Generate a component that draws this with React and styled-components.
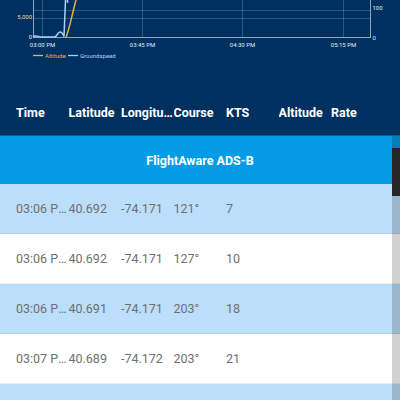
import styled, { createGlobalStyle } from 'styled-components';

const NAVY = '#00305f';

const rows = [
  { time: '03:06 PM', lat: '40.692', lon: '-74.171', course: '121°', kts: '7' },
  { time: '03:06 PM', lat: '40.692', lon: '-74.171', course: '127°', kts: '10' },
  { time: '03:06 PM', lat: '40.691', lon: '-74.171', course: '203°', kts: '18' },
  { time: '03:07 PM', lat: '40.689', lon: '-74.172', course: '203°', kts: '21' },
  { time: '03:07 PM', lat: '40.687', lon: '-74.173', course: '203°', kts: '24' },
];

const columns = ['Time', 'Latitude', 'Longitude', 'Course', 'KTS', 'Altitude', 'Rate'];

const GlobalStyle = createGlobalStyle`
  html, body {
    margin: 0;
    padding: 0;
    background: ${NAVY};
    overflow: hidden;
  }
  * {
    box-sizing: border-box;
  }
`;

const Chart = () => (
  <svg width="400" height="90" viewBox="0 0 400 90">
    <g stroke="rgba(255,255,255,0.18)" strokeWidth="1">
      <line x1="33" y1="10.5" x2="371" y2="10.5" />
      <line x1="33" y1="18.5" x2="371" y2="18.5" />
      <line x1="42.5" y1="0" x2="42.5" y2="37" />
      <line x1="142.5" y1="0" x2="142.5" y2="37" />
      <line x1="242.5" y1="0" x2="242.5" y2="37" />
      <line x1="343.5" y1="0" x2="343.5" y2="37" />
    </g>
    <g stroke="rgba(200,215,235,0.7)" strokeWidth="1" fill="none">
      <line x1="33.5" y1="0" x2="33.5" y2="37.5" />
      <line x1="33" y1="37.5" x2="371" y2="37.5" />
      <line x1="370.5" y1="0" x2="370.5" y2="37.5" />
    </g>
    <path
      d="M33,36.5 C36,35 38,37 42,37 L55,37 C57,36 58,32 60,32 C62,32 63,34 64,36.5 L65.5,0 M67.5,0 L67.5,3"
      stroke="#a9d0ff"
      strokeWidth="1.5"
      fill="none"
    />
    <path d="M66,37.5 C69,30 72,15 76,0" stroke="#e9b23c" strokeWidth="1.5" fill="none" />
    <g fontFamily="Roboto, sans-serif" fontSize="6" fill="#e6ecf5">
      <text x="32" y="18.5" textAnchor="end" fill="#efd59a">5,000</text>
      <text x="32" y="38.5" textAnchor="end">0</text>
      <text x="372.5" y="9.5">100</text>
      <text x="372.5" y="39.5">0</text>
      <text x="42.5" y="46.5" textAnchor="middle">03:00 PM</text>
      <text x="142.5" y="46.5" textAnchor="middle">03:45 PM</text>
      <text x="242.5" y="46.5" textAnchor="middle">04:30 PM</text>
      <text x="343.5" y="46.5" textAnchor="middle">05:15 PM</text>
    </g>
    <line x1="33" y1="55.5" x2="43" y2="55.5" stroke="#e9b23c" strokeWidth="1.3" />
    <text x="45" y="57.5" fontFamily="Roboto, sans-serif" fontSize="6" fill="#e9b23c">Altitude</text>
    <line x1="68" y1="55.5" x2="78" y2="55.5" stroke="#a9d0ff" strokeWidth="1.3" />
    <text x="80" y="57.5" fontFamily="Roboto, sans-serif" fontSize="6" fill="#a9d0ff">Groundspeed</text>
  </svg>
);

const App = () => (
  <Page>
    <GlobalStyle />
    <ChartBox>
      <Chart />
    </ChartBox>
    <HeaderRow>
      {columns.map((c) => (
        <HeadCell key={c}>{c}</HeadCell>
      ))}
    </HeaderRow>
    <Body>
      <SectionRow>FlightAware ADS-B</SectionRow>
      {rows.map((r, i) => (
        <DataRow key={i} $shaded={i % 2 === 0}>
          <Cell>{r.time}</Cell>
          <Cell>{r.lat}</Cell>
          <Cell>{r.lon}</Cell>
          <Cell>{r.course}</Cell>
          <Cell>{r.kts}</Cell>
          <Cell />
          <Cell />
        </DataRow>
      ))}
      <ScrollTrack>
        <ScrollThumb />
      </ScrollTrack>
    </Body>
  </Page>
);

export default App;

const Page = styled.div`
  width: 400px;
  height: 400px;
  overflow: hidden;
  background: ${NAVY};
  font-family: Roboto, 'Noto Sans', sans-serif;
`;

const ChartBox = styled.div`
  height: 90px;
  display: flex;
`;

const HeaderRow = styled.div`
  display: flex;
  height: 45px;
  align-items: center;
  padding-left: 16px;
`;

const HeadCell = styled.div`
  width: 52.5px;
  color: #ffffff;
  font-size: 12.5px;
  font-weight: 700;
  white-space: nowrap;
  overflow: hidden;
  text-overflow: ellipsis;
`;

const Body = styled.div`
  position: relative;
  border-top: 1px solid #0d5d96;
`;

const SectionRow = styled.div`
  height: 48px;
  display: flex;
  align-items: center;
  justify-content: center;
  background: #039be5;
  color: #ffffff;
  font-size: 12.5px;
  font-weight: 700;
`;

const DataRow = styled.div`
  display: flex;
  height: 50px;
  align-items: center;
  padding-left: 16px;
  background: ${(p) => (p.$shaded ? '#bbdefb' : '#ffffff')};
  border-bottom: 1px solid rgba(0, 0, 0, 0.06);
`;

const Cell = styled.div`
  width: 52.5px;
  color: #707070;
  font-size: 12.5px;
  white-space: nowrap;
  overflow: hidden;
  text-overflow: ellipsis;
`;

const ScrollTrack = styled.div`
  position: absolute;
  top: 0;
  right: 0;
  bottom: 0;
  width: 8px;
  background: rgba(0, 0, 0, 0.18);
`;

const ScrollThumb = styled.div`
  margin-top: 12px;
  height: 48px;
  background: #262626;
`;
